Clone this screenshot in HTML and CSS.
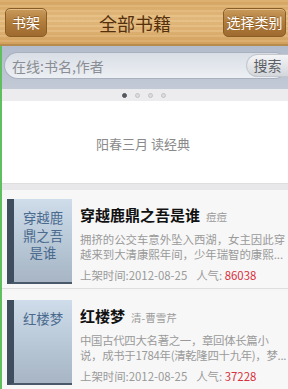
FILE: index.html
```html
<!DOCTYPE html>
<html lang="zh">
<head>
<meta charset="utf-8">
<link rel="stylesheet" href="styles.css">
</head>
<body>
<header class="topbar">
  <button class="btn btn-left">书架</button>
  <h1 class="title">全部书籍</h1>
  <button class="btn btn-right">选择类别</button>
</header>
<main class="main">
  <div class="search">
    <div class="search-box">
      <span class="placeholder">在线:书名,作者</span>
      <span class="search-btn">搜索</span>
    </div>
  </div>
  <div class="dots">
    <span class="dot on"></span><span class="dot"></span><span class="dot"></span><span class="dot"></span>
  </div>
  <div class="banner">阳春三月 读经典</div>
  <div class="gap"></div>
  <div class="book">
    <div class="cover">穿越鹿鼎之吾是谁</div>
    <div class="info">
      <div class="name">穿越鹿鼎之吾是谁<span class="author">痘痘</span></div>
      <p class="desc">拥挤的公交车意外坠入西湖，女主因此穿越来到大清康熙年间，少年瑞智的康熙...</p>
      <div class="meta"><span>上架时间:2012-08-25</span><span class="pop">人气: <span class="hot">86038</span></span></div>
    </div>
  </div>
  <div class="book">
    <div class="cover">红楼梦</div>
    <div class="info">
      <div class="name">红楼梦<span class="author">清-曹雪芹</span></div>
      <p class="desc tight">中国古代四大名著之一，章回体长篇小说，成书于1784年(清乾隆四十九年)，梦...</p>
      <div class="meta"><span>上架时间:2012-08-25</span><span class="pop">人气: <span class="hot">37228</span></span></div>
    </div>
  </div>
</main>
</body>
</html>
```
FILE: styles.css
```css
* { box-sizing: border-box; }
html, body { margin: 0; padding: 0; }
body {
  width: 288px;
  height: 389px;
  overflow: hidden;
  font-family: "Noto Sans CJK SC", "Noto Sans", sans-serif;
  background: #f5f5f5;
}
.topbar {
  height: 46px;
  display: flex;
  align-items: center;
  padding: 0 2px 0 5px;
  background:
    repeating-linear-gradient(180deg, rgba(255,255,255,0.07) 0 2px, rgba(120,70,20,0.05) 2px 5px),
    linear-gradient(180deg, #d9a964 0%, #e6bd80 40%, #e2b677 70%, #d6a560 100%);
  border-bottom: 2px solid #b78a4d;
}
.btn {
  height: 29px;
  margin: 0;
  padding: 0;
  border: 1px solid #8a5d26;
  border-radius: 5px;
  background: linear-gradient(180deg, #c99a5a 0%, #b07c3c 50%, #9e6a2e 100%);
  box-shadow: inset 0 1px 0 rgba(255,230,190,0.5);
  color: #fff;
  font-family: inherit;
  font-size: 14px;
  line-height: 27px;
  text-shadow: 0 -1px 0 rgba(80,40,0,0.4);
}
.btn-left { width: 42px; }
.btn-right { width: 63px; }
.title {
  flex: 1;
  margin: 2px 0 0;
  text-align: center;
  font-size: 18px;
  font-weight: normal;
  color: #54300c;
  line-height: 24px;
}
.main {
  border-left: 2px solid #5fbf5f;
}
.search {
  height: 43px;
  padding: 6px 0 0 2px;
  background: linear-gradient(180deg, #b2bccc 0%, #c3cad6 100%);
}
.search-box {
  height: 27px;
  display: flex;
  align-items: center;
  justify-content: space-between;
  border-radius: 14px;
  background: linear-gradient(180deg, #d9dee6 0%, #eceff3 100%);
  border: 1px solid #a9b1bf;
  border-right: none;
  padding-left: 7px;
}
.placeholder {
  font-size: 14px;
  color: #8a8d93;
}
.search-btn {
  width: 42px;
  height: 23px;
  border-radius: 12px 0 0 12px;
  background: linear-gradient(180deg, #f4f5f7 0%, #d3d6db 100%);
  border: 1px solid #c4c8ce;
  border-right: none;
  font-size: 14px;
  line-height: 21px;
  color: #5c5f64;
  text-align: center;
}
.dots {
  height: 12px;
  display: flex;
  justify-content: center;
  align-items: center;
  gap: 8px;
  padding-right: 2px;
  background: #ececef;
}
.dot {
  width: 5px;
  height: 5px;
  border-radius: 50%;
  background: #dcdcdf;
  border: 1px solid #c2c2c6;
}
.dot.on {
  background: #55585e;
  border-color: #55585e;
}
.banner {
  height: 82px;
  background: #fff;
  display: flex;
  align-items: center;
  justify-content: center;
  font-size: 13px;
  color: #8a8a8a;
  padding-top: 2px;
  padding-right: 4px;
}
.gap {
  height: 7px;
  background: #e8e8ea;
  border-top: 1px solid #dedee0;
}
.book {
  display: flex;
  height: 99px;
  padding: 9px 0 0 5px;
  background: #f7f7f7;
  border-bottom: 1px solid #dedede;
  margin-bottom: 2px;
}
.cover {
  width: 65px;
  height: 85px;
  flex: none;
  border-left: 7px solid #3f4e5f;
  border-bottom: 2px solid #4a596a;
  background: linear-gradient(180deg, #cfdcea 0%, #b9c9d8 50%, #a7b5c4 100%);
  padding: 10px 4px 0;
  text-align: center;
  font-size: 13.4px;
  line-height: 17.5px;
  color: #4a6a8e;
}
.info {
  flex: 1;
  min-width: 0;
  padding-left: 8px;
  padding-top: 6px;
  line-height: 15px;
}
.name {
  font-size: 15px;
  font-weight: bold;
  line-height: 20px;
  color: #111;
  white-space: nowrap;
}
.author {
  font-size: 10.5px;
  font-weight: normal;
  color: #9a9a9a;
  margin-left: 6px;
}
.desc {
  margin: 5px 0 0;
  height: 30px;
  font-size: 11.4px;
  line-height: 15px;
  color: #9a9a9a;
  overflow: hidden;
}
.desc.tight {
  letter-spacing: -0.3px;
}
.meta {
  display: flex;
  gap: 9px;
  margin-top: 6px;
  font-size: 11.4px;
  line-height: 15px;
  color: #9a9a9a;
  white-space: nowrap;
}
.hot { color: #d8303a; }
```
